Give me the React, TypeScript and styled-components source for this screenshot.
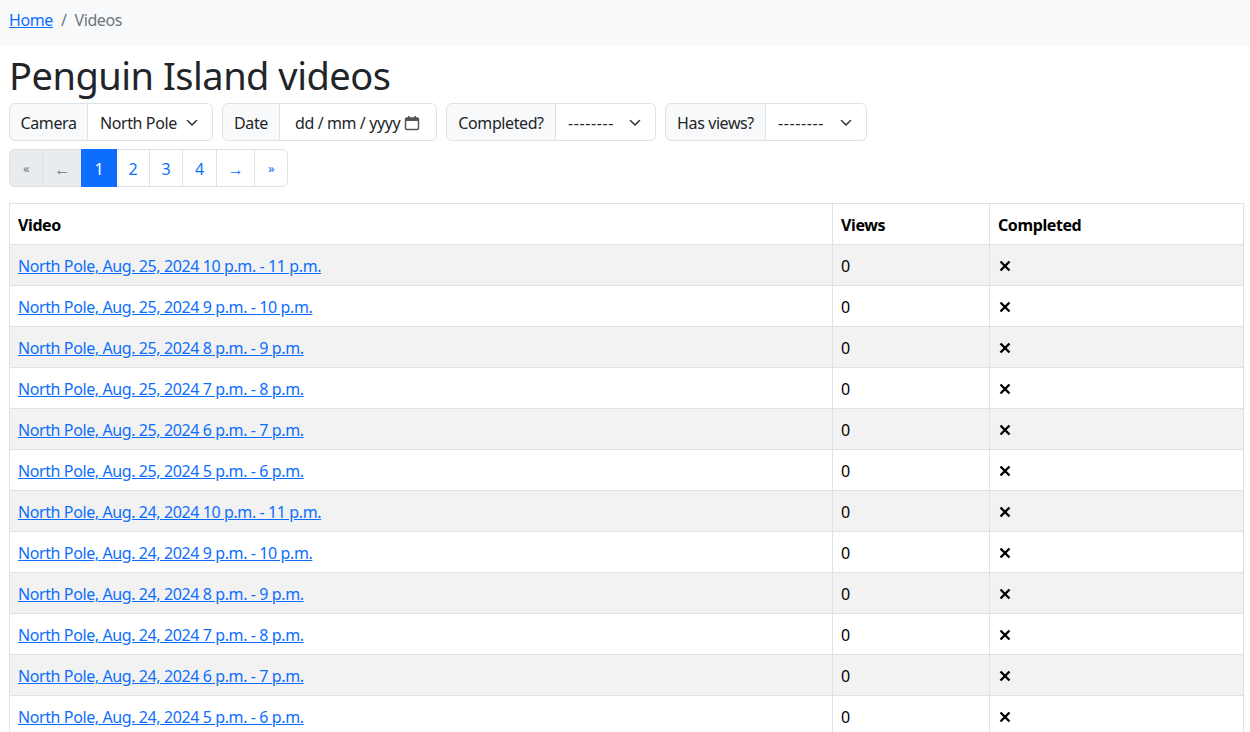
import React from "react";
import styled, { createGlobalStyle } from "styled-components";

const Global = createGlobalStyle`
  html, body { margin: 0; padding: 0; background: #fff; }
  body {
    font-family: "Noto Sans", "Open Sans", sans-serif;
    font-size: 16px;
    line-height: 1.5;
    letter-spacing: -0.4px;
    color: #212529;
  }
  * { box-sizing: border-box; }
`;

const Breadcrumb = styled.nav`
  background: #f8f9fa;
  height: 46px;
  padding: 8px 9px;
  display: flex;
  align-items: flex-start;
  gap: 8px;
  color: #6c757d;
`;

const Crumb = styled.a`
  color: #0d6efd;
  text-decoration: underline;
`;

const Main = styled.main`
  padding: 0 6px 0 9px;
`;

const Title = styled.h1`
  font-size: 38px;
  font-weight: 400;
  line-height: 48px;
  letter-spacing: -0.5px;
  margin: 5px 0 4px;
  color: #212529;
`;

const Filters = styled.form`
  display: flex;
  gap: 9px;
`;

const Group = styled.div`
  display: flex;
  height: 38px;
`;

const GroupLabel = styled.span<{ $w: number }>`
  display: flex;
  align-items: center;
  justify-content: center;
  width: ${(p) => p.$w}px;
  padding-top: 2px;
  background: #f8f9fa;
  border: 1px solid #dee2e6;
  border-radius: 6px 0 0 6px;
  color: #212529;
  white-space: nowrap;
`;

const Select = styled.div<{ $w: number; $dashes?: boolean }>`
  position: relative;
  display: flex;
  align-items: center;
  width: ${(p) => p.$w}px;
  padding: 2px 36px 0 12px;
  border: 1px solid #dee2e6;
  border-left: none;
  border-radius: 0 6px 6px 0;
  background: #fff;
  white-space: nowrap;
  letter-spacing: ${(p) => (p.$dashes ? "0.6px" : "-0.4px")};
`;

const Chevron = styled.svg`
  position: absolute;
  right: 12px;
  top: 13px;
`;

const DateField = styled.div`
  display: flex;
  align-items: center;
  justify-content: space-between;
  width: 157px;
  padding: 2px 16px 0 15px;
  border: 1px solid #dee2e6;
  border-left: none;
  border-radius: 0 6px 6px 0;
  background: #fff;
  white-space: nowrap;
`;

const Pager = styled.ul`
  list-style: none;
  display: flex;
  margin: 8px 0 16px;
  padding: 0;
`;

const PageItem = styled.li<{ $w: number; $state?: "active" | "disabled"; $first?: boolean; $last?: boolean }>`
  display: flex;
  align-items: center;
  justify-content: center;
  width: ${(p) => p.$w}px;
  height: 38px;
  padding-top: 1px;
  border: 1px solid #dee2e6;
  margin-left: ${(p) => (p.$first ? 0 : -1)}px;
  border-radius: ${(p) => (p.$first ? "6px 0 0 6px" : p.$last ? "0 6px 6px 0" : "0")};
  background: ${(p) => (p.$state === "active" ? "#0d6efd" : p.$state === "disabled" ? "#e9ecef" : "#fff")};
  color: ${(p) => (p.$state === "active" ? "#fff" : p.$state === "disabled" ? "#6c757d" : "#0d6efd")};
  border-color: ${(p) => (p.$state === "active" ? "#0d6efd" : "#dee2e6")};
  position: relative;
  z-index: ${(p) => (p.$state === "active" ? 1 : 0)};
`;

const Small = styled.span`
  font-size: 13px;
`;

const Table = styled.table`
  width: 100%;
  border-collapse: collapse;
  border: 1px solid #dee2e6;
`;

const Th = styled.th<{ $w?: number }>`
  text-align: left;
  font-weight: 700;
  color: #000;
  padding: 9px 8px 7px;
  height: 41px;
  border: 1px solid #dee2e6;
  width: ${(p) => (p.$w ? `${p.$w}px` : "auto")};
`;

const Row = styled.tr<{ $odd: boolean }>`
  background: ${(p) => (p.$odd ? "#f2f2f2" : "#fff")};
`;

const Td = styled.td`
  padding: 9px 8px 7px;
  height: 41px;
  border: 1px solid #dee2e6;
  color: #000;
`;

const VideoLink = styled.a`
  color: #0d6efd;
  text-decoration: underline;
`;

const Cross = () => (
  <svg width="12" height="12" viewBox="0 0 12 12" style={{ display: "block", marginLeft: 1 }}>
    <path d="M1.5 1.5 L10.5 10.5 M10.5 1.5 L1.5 10.5" stroke="#000" strokeWidth="2.4" strokeLinecap="butt" />
  </svg>
);

const ChevronIcon = () => (
  <Chevron width="16" height="12" viewBox="0 0 16 12">
    <path d="M3.5 3.5 l4.5 4.5 4.5-4.5" fill="none" stroke="#343a40" strokeWidth="1.6" strokeLinecap="round" strokeLinejoin="round" />
  </Chevron>
);

const CalendarIcon = () => (
  <svg width="16" height="16" viewBox="0 0 16 16">
    <rect x="1.5" y="3" width="13" height="11.5" rx="1.5" fill="none" stroke="#555" strokeWidth="1.5" />
    <rect x="1.5" y="3" width="13" height="3" fill="#555" />
    <rect x="4" y="1" width="1.6" height="3" fill="#555" />
    <rect x="10.4" y="1" width="1.6" height="3" fill="#555" />
  </svg>
);

const videos: string[] = [];
["25", "24"].forEach((d) => {
  const slots = [
    "10 p.m. - 11 p.m.",
    "9 p.m. - 10 p.m.",
    "8 p.m. - 9 p.m.",
    "7 p.m. - 8 p.m.",
    "6 p.m. - 7 p.m.",
    "5 p.m. - 6 p.m.",
  ];
  slots.forEach((s) => videos.push(`North Pole, Aug. ${d}, 2024 ${s}`));
});

export default function App() {
  return (
    <>
      <Global />
      <Breadcrumb>
        <Crumb href="#">Home</Crumb>
        <span>/</span>
        <span>Videos</span>
      </Breadcrumb>
      <Main>
        <Title>Penguin Island videos</Title>
        <Filters>
          <Group>
            <GroupLabel $w={79}>Camera</GroupLabel>
            <Select $w={125}>
              North Pole
              <ChevronIcon />
            </Select>
          </Group>
          <Group>
            <GroupLabel $w={58}>Date</GroupLabel>
            <DateField>
              <span>dd / mm / yyyy</span>
              <CalendarIcon />
            </DateField>
          </Group>
          <Group>
            <GroupLabel $w={110}>Completed?</GroupLabel>
            <Select $w={100} $dashes>
              --------
              <ChevronIcon />
            </Select>
          </Group>
          <Group>
            <GroupLabel $w={101}>Has views?</GroupLabel>
            <Select $w={101} $dashes>
              --------
              <ChevronIcon />
            </Select>
          </Group>
        </Filters>
        <Pager>
          <PageItem $w={34} $first $state="disabled"><Small>«</Small></PageItem>
          <PageItem $w={40} $state="disabled">←</PageItem>
          <PageItem $w={36} $state="active">1</PageItem>
          <PageItem $w={34}>2</PageItem>
          <PageItem $w={34}>3</PageItem>
          <PageItem $w={35}>4</PageItem>
          <PageItem $w={39}>→</PageItem>
          <PageItem $w={34} $last><Small>»</Small></PageItem>
        </Pager>
        <Table>
          <thead>
            <tr>
              <Th>Video</Th>
              <Th $w={157}>Views</Th>
              <Th $w={254}>Completed</Th>
            </tr>
          </thead>
          <tbody>
            {videos.map((v, i) => (
              <Row key={v} $odd={i % 2 === 0}>
                <Td><VideoLink href="#">{v}</VideoLink></Td>
                <Td>0</Td>
                <Td><Cross /></Td>
              </Row>
            ))}
          </tbody>
        </Table>
      </Main>
    </>
  );
}
